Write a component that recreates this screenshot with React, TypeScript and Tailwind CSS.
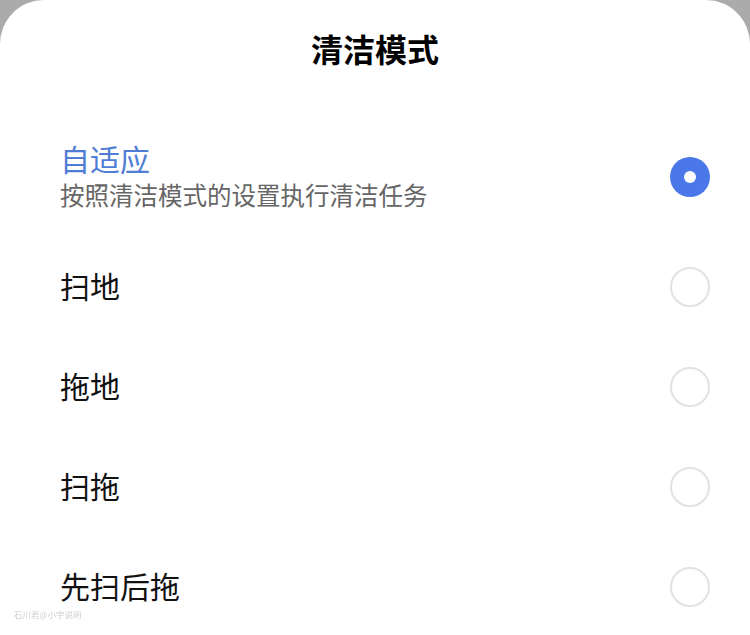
const options = [
  { label: '扫地' },
  { label: '拖地' },
  { label: '扫拖' },
  { label: '先扫后拖' },
]

function Radio({ checked }: { checked?: boolean }) {
  if (checked) {
    return (
      <div className="flex h-10 w-10 shrink-0 items-center justify-center rounded-full bg-[#4a78e8]">
        <div className="h-3 w-3 rounded-full bg-white" />
      </div>
    )
  }
  return <div className="h-10 w-10 shrink-0 rounded-full border-2 border-[#e2e2e2]" />
}

export default function App() {
  return (
    <div
      className="h-[635px] w-[750px] overflow-hidden bg-[#ababab]"
      style={{ fontFamily: '"Noto Sans CJK SC", "Noto Sans", sans-serif' }}
    >
      <div className="relative h-full rounded-t-[44px] bg-white">
        <div className="flex h-[100px] items-center justify-center pb-1 text-[32px] font-bold text-black">
          清洁模式
        </div>

        <div className="mt-[17px] flex h-[120px] items-center justify-between pl-[60px] pr-10">
          <div className="flex flex-col pb-1">
            <span className="text-[30px] leading-[36px] text-[#4f7dd6]">自适应</span>
            <span className="mt-1 text-[24.5px] leading-[30px] text-[#666666]">按照清洁模式的设置执行清洁任务</span>
          </div>
          <Radio checked />
        </div>

        {options.map((o) => (
          <div key={o.label} className="flex h-[100px] items-center justify-between pl-[60px] pr-10">
            <span className="pb-1 text-[30px] leading-[36px] text-[#111111]">{o.label}</span>
            <Radio />
          </div>
        ))}

        <div className="absolute bottom-[17px] left-[14px] text-[8.5px] leading-none text-[#cfcfcf] blur-[0.4px]">
          石川君@小宇说明
        </div>
      </div>
    </div>
  )
}
